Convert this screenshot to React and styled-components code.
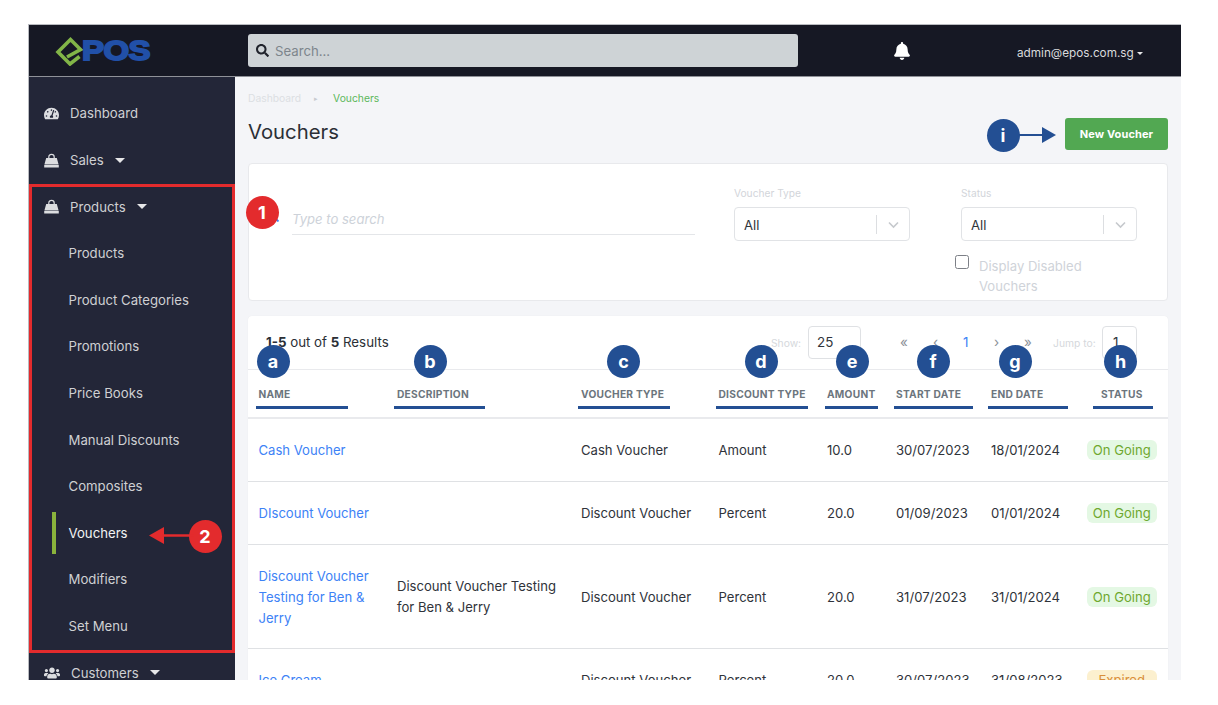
import React from "react";
import styled, { createGlobalStyle } from "styled-components";
import { FaTachometerAlt, FaUsers, FaSearch, FaBell } from "react-icons/fa";

const Global = createGlobalStyle`
  html, body { margin: 0; padding: 0; background: #fff; }
  * { box-sizing: border-box; }
  body { font-family: Inter, "Liberation Sans", sans-serif; color: #2b2f36; }
`;

const Page = styled.div`
  position: relative;
  width: 1218px;
  height: 705px;
  overflow: hidden;
  background: #fff;
`;

const Frame = styled.div`
  position: absolute;
  left: 28px;
  top: 24px;
  width: 1153px;
  height: 656px;
  overflow: hidden;
  display: grid;
  grid-template-columns: 206px 1fr;
  grid-template-rows: 52px 1fr;
  background: #f4f5f8;
  border-top: 1px solid #b9bbc0;
  border-left: 1px solid #b9bbc0;
`;

const TopBar = styled.header`
  grid-column: 1 / 3;
  background: #161824;
  position: relative;
  border-bottom: 1px solid #8f9198;
`;

const LogoWrap = styled.div`
  position: absolute;
  left: 26px;
  top: 11px;
  display: flex;
  align-items: center;
`;

const LogoText = styled.span`
  font-family: "Liberation Sans", sans-serif;
  font-weight: 700;
  font-size: 27.5px;
  line-height: 30px;
  color: #2150a8;
  letter-spacing: -0.5px;
  -webkit-text-stroke: 1.8px #2150a8;
  transform: scaleX(1.2);
  transform-origin: left center;
  margin-left: -3px;
`;

const SearchBar = styled.div`
  position: absolute;
  left: 219px;
  top: 9px;
  width: 550px;
  height: 33px;
  background: #ced3d6;
  border-radius: 3px;
  display: flex;
  align-items: center;
  padding-left: 8px;
  font-size: 13.2px;
  color: #7d858c;
  gap: 6px;
  svg { color: #20232c; font-size: 13px; }
`;

const BellWrap = styled.div`
  position: absolute;
  left: 864px;
  top: 17px;
  color: #fff;
  font-size: 18px;
  line-height: 0;
`;

const UserMenu = styled.div`
  position: absolute;
  left: 988px;
  top: 19px;
  font-size: 11.75px;
  line-height: 18px;
  color: #d9dadd;
  display: flex;
  align-items: center;
  gap: 3px;
`;

const Caret = styled.svg`
  flex: none;
  fill: #e6e6e8;
  width: ${(p) => p.$w}px;
  height: ${(p) => p.$w / 2}px;
  margin-left: ${(p) => p.$gap}px;
`;

const Side = styled.nav`
  background: #232638;
  padding-top: 13.2px;
  overflow: hidden;
`;

const SideItem = styled.div`
  position: relative;
  height: 46.6px;
  display: flex;
  align-items: center;
  padding-left: ${(p) => (p.$sub ? 39.5 : 15)}px;
  font-size: 13.2px;
  color: ${(p) => (p.$active ? "#f2f3f4" : "#cfd0d3")};
`;

const SideIcon = styled.span`
  width: ${(p) => p.$slot || 26}px;
  flex: none;
  line-height: 0;
  color: #dcdde0;
  svg { width: ${(p) => p.$w || 15}px; height: ${(p) => p.$w || 15}px; }
`;

const ActiveBar = styled.i`
  position: absolute;
  left: 23px;
  top: 2px;
  width: 4px;
  height: 42px;
  background: #8ab33c;
`;

const Main = styled.main`
  padding: 0 13px;
  position: relative;
  overflow: hidden;
`;

const Crumbs = styled.div`
  height: 14px;
  margin-top: 14px;
  display: flex;
  align-items: center;
  font-size: 10.3px;
  color: #dcdfe3;
`;

const CrumbSep = styled.span`
  font-size: 7px;
  margin: 0 15px 0 13px;
  color: #c8cbd0;
`;

const CrumbNow = styled.span`
  color: #5cb85c;
`;

const TitleRow = styled.div`
  display: flex;
  justify-content: space-between;
  align-items: flex-start;
  height: 55px;
  margin-top: 3px;
`;

const Title = styled.h1`
  margin: 8px 0 0;
  font-size: 20.3px;
  line-height: 32px;
  font-weight: 400;
  color: #2b2f36;
`;

const PrimaryButton = styled.button`
  width: 103px;
  height: 32px;
  border: 0;
  border-radius: 3px;
  margin-top: 10px;
  background: #52a852;
  color: #fff;
  font: 700 11px Inter, sans-serif;
  letter-spacing: 0.1px;
`;

const FilterCard = styled.section`
  position: relative;
  height: 138px;
  background: #fff;
  border: 1px solid #e8e9ec;
  border-radius: 4px;
`;

const SearchGlyph = styled.div`
  position: absolute;
  left: 18px;
  top: 46px;
  color: #3d82f6;
  font-size: 12px;
  line-height: 0;
`;

const TypeSearch = styled.div`
  position: absolute;
  left: 43px;
  top: 44px;
  width: 403px;
  height: 27px;
  border-bottom: 1px solid #e4e6e9;
  font-size: 13.1px;
  line-height: 22px;
  font-style: italic;
  color: #cdd2d9;
`;

const Field = styled.div`
  position: absolute;
  left: ${(p) => p.$x}px;
  top: 23px;
  width: 176px;
`;

const FieldLabel = styled.div`
  font-size: 10.2px;
  line-height: 13px;
  color: #d2d5da;
  margin-bottom: 7px;
`;

const SelectBox = styled.div`
  height: 34px;
  border: 1px solid #e1e3e6;
  border-radius: 4px;
  display: flex;
  align-items: center;
  padding: 2px 0 0 9px;
  font-size: 13.1px;
  color: #30343a;
  position: relative;
`;

const SelectDivider = styled.span`
  position: absolute;
  right: 32px;
  top: 7px;
  height: 19px;
  border-left: 1px solid #dcdee1;
`;

const Chevron = styled.svg`
  position: absolute;
  right: 10px;
  top: 13px;
  width: 11px;
  height: 8px;
  fill: none;
  stroke: #c6c9cd;
  stroke-width: 1.6;
`;

const CheckBox = styled.span`
  position: absolute;
  left: 705.5px;
  top: 91px;
  width: 14px;
  height: 14px;
  border: 1px solid #7d8087;
  border-radius: 2.5px;
`;

const CheckLabel = styled.div`
  position: absolute;
  left: 730px;
  top: 92px;
  width: 125px;
  font-size: 13.1px;
  line-height: 20px;
  color: #cfd3d9;
`;

const TableCard = styled.section`
  position: relative;
  margin-top: 15px;
  background: #fff;
  border-radius: 4px 4px 0 0;
  box-shadow: 0 0 1px rgba(0, 0, 0, 0.08);
`;

const Toolbar = styled.div`
  position: relative;
  height: 54px;
  font-size: 13.3px;
  border-bottom: 1px solid #e9eaed;
  b { font-weight: 700; }
`;

const Results = styled.div`
  position: absolute;
  left: 18px;
  top: 17px;
  line-height: 18px;
  color: #2b2f36;
`;

const Faint = styled.span`
  position: absolute;
  left: ${(p) => p.$x}px;
  top: 20px;
  font-size: 10.3px;
  line-height: 14px;
  color: #d5d8dc;
`;

const PageSizeBox = styled.div`
  position: absolute;
  left: 560px;
  top: 10px;
  width: 53px;
  height: 33px;
  border: 1px solid #dfe1e4;
  border-radius: 4px;
  padding-left: 8px;
  font-size: 13.4px;
  line-height: 31px;
  color: #30343a;
`;

const PageMark = styled.span`
  position: absolute;
  left: ${(p) => p.$x}px;
  top: 17px;
  font-size: 13.4px;
  line-height: 18px;
  color: ${(p) => (p.$on ? "#3d82f6" : "#8b9097")};
`;

const JumpBox = styled.div`
  position: absolute;
  left: 854px;
  top: 10px;
  width: 35px;
  height: 33px;
  border: 1px solid #dfe1e4;
  border-radius: 4px;
  padding-left: 10px;
  font-size: 13.4px;
  line-height: 31px;
  color: #30343a;
`;

const Table = styled.table`
  width: 920px;
  table-layout: fixed;
  border-collapse: collapse;
  font-size: 13.1px;
`;

const HeadCell = styled.th`
  position: relative;
  height: 48px;
  padding: 16.5px 0 0 ${(p) => (p.$center ? 0 : 10.5)}px;
  text-align: ${(p) => (p.$center ? "center" : "left")};
  font-size: 10.2px;
  font-weight: 700;
  letter-spacing: 0.25px;
  color: #6c757d;
  border-bottom: 2px solid #e9eaed;
  vertical-align: top;
  line-height: 14px;
`;

const HeadRule = styled.i`
  position: absolute;
  left: ${(p) => p.$l}px;
  top: 36px;
  width: ${(p) => p.$w}px;
  height: 3px;
  background: #234f93;
`;

const Row = styled.tr`
  height: ${(p) => p.$h}px;
  border-bottom: 1px solid #dfe1e4;
`;

const Cell = styled.td`
  padding: 2px 8px 0 10.5px;
  line-height: 21px;
  color: #2f333a;
  vertical-align: middle;
`;

const StatusCell = styled(Cell)`
  padding: 2px 0 0;
  text-align: center;
`;

const NameLink = styled.a`
  color: #3d82f6;
`;

const Pill = styled.span`
  display: inline-block;
  width: 70px;
  height: 20px;
  line-height: 20px;
  border-radius: 6px;
  text-align: center;
  background: ${(p) => (p.$expired ? "#fcf0cf" : "#e4f8e4")};
  color: ${(p) => (p.$expired ? "#d98f3a" : "#6fa82f")};
`;

const RedBox = styled.div`
  position: absolute;
  left: 29px;
  top: 184px;
  width: 206px;
  height: 469px;
  border: 3px solid #e32b2d;
`;

const Marker = styled.div`
  position: absolute;
  left: ${(p) => p.$x - 16.5}px;
  top: ${(p) => p.$y - 16.5}px;
  width: 33px;
  height: 33px;
  border-radius: 50%;
  background: ${(p) => (p.$red ? "#e32b2d" : "#234f93")};
  color: #fff;
  font-size: 18px;
  font-weight: 700;
  line-height: 33px;
  text-align: center;
`;

const ArrowSvg = styled.svg`
  position: absolute;
  left: ${(p) => p.$x}px;
  top: ${(p) => p.$y}px;
`;

const columns = [
  { t: "NAME", w: 138.5, l: 8, rw: 92 },
  { t: "DESCRIPTION", w: 184, l: 7.5, rw: 91 },
  { t: "VOUCHER TYPE", w: 137.5, l: 7.5, rw: 92 },
  { t: "DISCOUNT TYPE", w: 108.5, l: 8, rw: 92 },
  { t: "AMOUNT", w: 69, l: 8.5, rw: 53 },
  { t: "START DATE", w: 95, l: 8.5, rw: 79 },
  { t: "END DATE", w: 95, l: 7.5, rw: 80 },
  { t: "STATUS", w: 92.5, l: 17.5, rw: 60, center: true },
];

const rows = [
  { h: 63, name: "Cash Voucher", type: "Cash Voucher", disc: "Amount", amt: "10.0", s: "30/07/2023", e: "18/01/2024" },
  { h: 63, name: "DIscount Voucher", type: "Discount Voucher", disc: "Percent", amt: "20.0", s: "01/09/2023", e: "01/01/2024" },
  { h: 104, name: "Discount Voucher Testing for Ben & Jerry", desc: "Discount Voucher Testing for Ben & Jerry", type: "Discount Voucher", disc: "Percent", amt: "20.0", s: "31/07/2023", e: "31/01/2024" },
  { h: 63, name: "Ice Cream", type: "Discount Voucher", disc: "Percent", amt: "20.0", s: "30/07/2023", e: "31/08/2023", expired: true },
];

const BagIcon = () => (
  <svg viewBox="0 0 15 15">
    <path d="M4.8 6 V4 C4.8 0.4 10.2 0.4 10.2 4 V6" fill="none" stroke="currentColor" strokeWidth="1.2" />
    <path d="M2.2 5 H12.8 L14.6 11.4 H0.4 Z M0.2 12 H14.8 V14.6 H0.2 Z" fill="currentColor" />
  </svg>
);

const DownCaret = ({ w = 10, gap = 11 }) => (
  <Caret $w={w} $gap={gap} viewBox="0 0 10 5"><path d="M0 0 H10 L5 5 Z" /></Caret>
);

const menuSub = ["Products", "Product Categories", "Promotions", "Price Books", "Manual Discounts", "Composites", "Vouchers", "Modifiers", "Set Menu"];

const letters = [
  ["a", 273], ["b", 430], ["c", 623.5], ["d", 761], ["e", 852], ["f", 933], ["g", 1015], ["h", 1120.5],
];

const Logo = () => (
  <LogoWrap>
    <svg width="30" height="30" viewBox="0 0 30 30">
      <path d="M24.5 20.5 L15 28 L3 16 L15.5 3.5 L25.5 13.5 L12 21" fill="none" stroke="#82b548" strokeWidth="3.6" strokeLinejoin="miter" />
    </svg>
    <LogoText>POS</LogoText>
  </LogoWrap>
);

const Select = () => (
  <SelectBox>
    All
    <SelectDivider />
    <Chevron viewBox="0 0 11 8"><path d="M1 1.5 L5.5 6 L10 1.5" /></Chevron>
  </SelectBox>
);

export default function App() {
  return (
    <Page>
      <Global />
      <Frame>
        <TopBar>
          <Logo />
          <SearchBar><FaSearch />Search...</SearchBar>
          <BellWrap><FaBell /></BellWrap>
          <UserMenu>admin@epos.com.sg<DownCaret w={6} gap={0} /></UserMenu>
        </TopBar>
        <Side>
          <SideItem><SideIcon><FaTachometerAlt /></SideIcon>Dashboard</SideItem>
          <SideItem><SideIcon><BagIcon /></SideIcon>Sales<DownCaret /></SideItem>
          <SideItem><SideIcon><BagIcon /></SideIcon>Products<DownCaret /></SideItem>
          {menuSub.map((t) => (
            <SideItem key={t} $sub $active={t === "Vouchers"}>
              {t === "Vouchers" && <ActiveBar />}
              {t}
            </SideItem>
          ))}
          <SideItem><SideIcon $w={16} $slot={27}><FaUsers /></SideIcon>Customers<DownCaret /></SideItem>
        </Side>
        <Main>
          <Crumbs>Dashboard<CrumbSep>▸</CrumbSep><CrumbNow>Vouchers</CrumbNow></Crumbs>
          <TitleRow>
            <Title>Vouchers</Title>
            <PrimaryButton>New Voucher</PrimaryButton>
          </TitleRow>
          <FilterCard>
            <SearchGlyph><FaSearch /></SearchGlyph>
            <TypeSearch>Type to search</TypeSearch>
            <Field $x={485}><FieldLabel>Voucher Type</FieldLabel><Select /></Field>
            <Field $x={712}><FieldLabel>Status</FieldLabel><Select /></Field>
            <CheckBox />
            <CheckLabel>Display Disabled Vouchers</CheckLabel>
          </FilterCard>
          <TableCard>
            <Toolbar>
              <Results><b>1-5</b> out of <b>5</b> Results</Results>
              <Faint $x={523}>Show:</Faint>
              <PageSizeBox>25</PageSizeBox>
              <PageMark $x={652}>«</PageMark>
              <PageMark $x={685}>‹</PageMark>
              <PageMark $x={715} $on>1</PageMark>
              <PageMark $x={746}>›</PageMark>
              <PageMark $x={776}>»</PageMark>
              <Faint $x={805}>Jump to:</Faint>
              <JumpBox>1</JumpBox>
            </Toolbar>
            <Table>
              <colgroup>
                {columns.map((c) => <col key={c.t} width={c.w} />)}
              </colgroup>
              <thead>
                <tr>
                  {columns.map((c) => (
                    <HeadCell key={c.t} $center={c.center}>
                      {c.t}
                      <HeadRule $l={c.l} $w={c.rw} />
                    </HeadCell>
                  ))}
                </tr>
              </thead>
              <tbody>
                {rows.map((r) => (
                  <Row key={r.name} $h={r.h}>
                    <Cell><NameLink>{r.name}</NameLink></Cell>
                    <Cell>{r.desc}</Cell>
                    <Cell>{r.type}</Cell>
                    <Cell>{r.disc}</Cell>
                    <Cell>{r.amt}</Cell>
                    <Cell>{r.s}</Cell>
                    <Cell>{r.e}</Cell>
                    <StatusCell><Pill $expired={r.expired}>{r.expired ? "Expired" : "On Going"}</Pill></StatusCell>
                  </Row>
                ))}
              </tbody>
            </Table>
          </TableCard>
        </Main>
      </Frame>

      <RedBox />
      <Marker $red $x={262} $y={212}>1</Marker>
      <Marker $red $x={205} $y={536}>2</Marker>
      <ArrowSvg $x={148} $y={526} width="46" height="20" viewBox="0 0 46 20">
        <path d="M1 9.5 L16 1 L16 18 Z" fill="#e32b2d" />
        <path d="M14 9.5 H46" stroke="#e32b2d" strokeWidth="2.5" />
      </ArrowSvg>
      <Marker $x={1003} $y={135}>i</Marker>
      <ArrowSvg $x={1018} $y={126} width="40" height="18" viewBox="0 0 40 18">
        <path d="M38 9 L24 1 L24 17 Z" fill="#234f93" />
        <path d="M0 9 H26" stroke="#234f93" strokeWidth="2" />
      </ArrowSvg>
      {letters.map(([l, x]) => <Marker key={l} $x={x} $y={361}>{l}</Marker>)}
    </Page>
  );
}
